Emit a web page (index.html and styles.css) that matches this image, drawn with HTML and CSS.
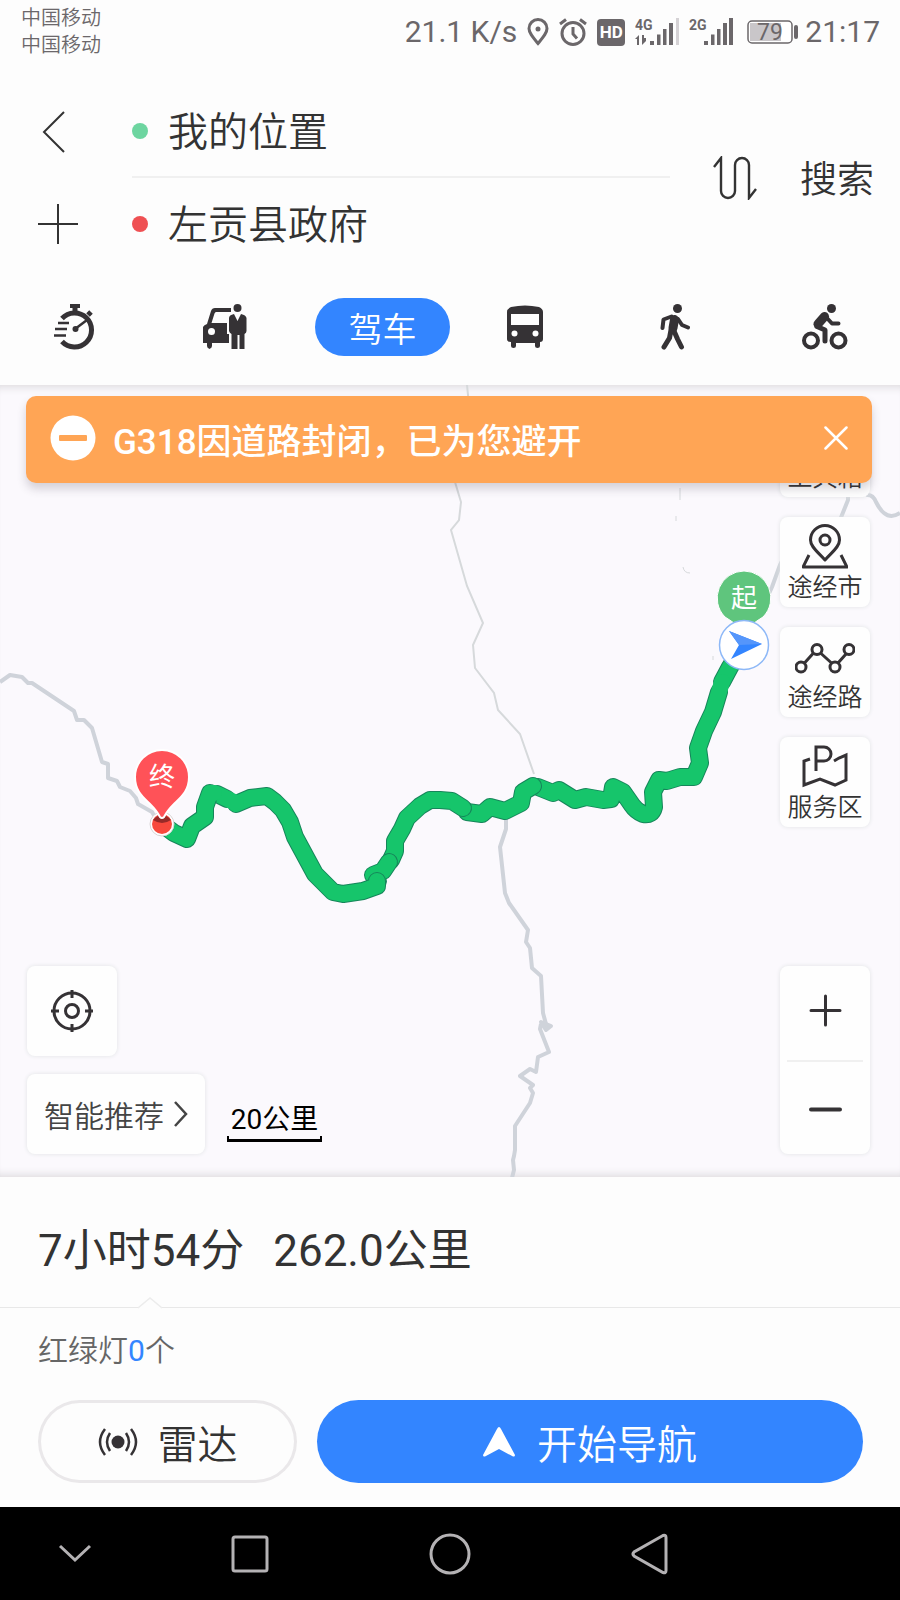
FILE: index.html
```html
<!DOCTYPE html>
<html lang="zh-CN">
<head>
<meta charset="utf-8">
<meta name="viewport" content="width=device-width, initial-scale=1">
<title>路线规划</title>
<link rel="stylesheet" href="styles.css">
</head>
<body>
<div class="status">
  <div class="carriers"><span>中国移动</span><span>中国移动</span></div>
  <div class="indicators">
    <span class="speed">21.1 K/s</span>
    <svg width="22" height="28" viewBox="0 0 22 28" fill="none" stroke="#6b676a" stroke-width="3"><path d="M11 25.500C6 19.500 2 15 2 10.500a9 9 0 0 1 18 0C20 15 16 19.500 11 25.500z"/><circle cx="11" cy="11" r="2.500" fill="#6b676a" stroke="none"/></svg>
    <svg class="alarm" width="28" height="28" viewBox="0 0 28 28" fill="none" stroke="#6b676a" stroke-width="3"><circle cx="14" cy="15.500" r="11"/><path d="M14 9v7l4 4.500M1 6l6-4.500M27 6l-6-4.500"/></svg>
    <span class="hd">HD</span>
    <svg class="signal" width="44" height="28" viewBox="0 0 44 28" fill="#6b676a"><text x="0" y="12" class="net">4G</text><path d="M0 21l4-4v10H2v-6zM7 17v10l4-4v-3H9v-3zM15 23h4v4h-4zM22 16.500h3.500V27H22zM28 11h3.500v16H28zM34 5h4v22h-4z"/><path fill="#d5d2d5" d="M41 0h3v27h-3z"/></svg>
    <svg class="signal" width="44" height="28" viewBox="0 0 44 28" fill="#6b676a"><text x="0" y="12" class="net">2G</text><path d="M15 23h4v4h-4zM22 16.500h3.500V27H22zM28 11h3.500v16H28zM34 5h4v22h-4zM40 0h4v27h-4z"/></svg>
    <svg class="battery" width="51" height="26" viewBox="0 0 51 26"><rect x="1" y="2" width="44" height="22" rx="4" fill="#fff" stroke="#6b676a" stroke-width="1.500"/><path fill="#c9c6c9" d="M3 4h31v18H3z"/><rect x="47" y="6" width="4" height="14" rx="2" fill="#6b676a"/><text x="23" y="21" class="level">79</text></svg>
    <span>21:17</span>
  </div>
</div>

<header class="header">
  <div class="planner">
    <div class="rows">
      <div class="row">
        <button class="icon-btn" aria-label="返回"><svg width="40" height="42" viewBox="0 0 40 42" fill="none" stroke="#333" stroke-width="2"><path d="M26 1L6 21l20 20"/></svg></button>
        <label class="field line"><i class="dot from"></i><input aria-label="起点" value="我的位置"></label>
      </div>
      <div class="row">
        <button class="icon-btn" aria-label="添加途经点"><svg width="40" height="40" viewBox="0 0 40 40" stroke="#333" stroke-width="2"><path d="M0 20h40M20 0v40"/></svg></button>
        <label class="field"><i class="dot to"></i><input aria-label="终点" value="左贡县政府"></label>
      </div>
    </div>
    <button class="swap" aria-label="交换起终点"><svg width="44" height="44" viewBox="0 0 44 44" fill="none" stroke="#333" stroke-width="2.400"><path d="M1 11L8 2v33a7 7 0 0 0 14 0V9a7 7 0 0 1 14 0v33l7-9"/></svg></button>
    <button class="search">搜索</button>
  </div>
  <nav class="tabs" aria-label="出行方式">
    <button aria-label="智能"><svg width="44" height="46" viewBox="0 0 44 46" fill="none" stroke="#353235" stroke-width="5"><path d="M9 14.500a17 17 0 1 1 0 23"/><path d="M17 2h10" stroke-width="4"/><path d="M22 3v5M35 11l3-3"/><path d="M22 25L34 16" stroke-width="2.500"/><circle cx="22.500" cy="25" r="3" fill="#353235" stroke="none"/><path d="M5 19h11M2 25h12M1 31.500h12" stroke-width="2.500"/></svg></button>
    <button aria-label="打车"><svg width="46" height="46" viewBox="0 0 46 46" fill="#353235"><path d="M1 23q1-2 4-3L9 7q1-3 4-3h16v4H14q-1 0-1.500 1.500L9.500 19H25v11h2v9H10v3q0 2-2.500 3Q5 44 5 42v-3H1z"/><circle cx="9.500" cy="27.500" r="3.500" fill="#fff"/><circle cx="35.500" cy="4" r="4"/><path d="M27 14q0-3 5-4l3.500 7 3.500-7q5 1 5.500 4v13q0 2-2 3v15h-5V31h-2v14h-6V30q-2-1-2.500-3z"/></svg></button>
    <button class="active" aria-current="true">驾车</button>
    <button aria-label="公交"><svg width="36" height="44" viewBox="0 0 36 44" fill="#353235"><path fill-rule="evenodd" d="M0 7q0-3 4-5 14-3 28 0 4 2 4 5v27q0 3-3 3v4q0 2-2.500 2T28 41v-3H9v3q0 2-2.500 2T4 41v-4q-4 0-4-3zM4 9v11h28V9z"/><circle cx="7.500" cy="28.500" r="3" fill="#fff"/><circle cx="28.500" cy="28.500" r="3" fill="#fff"/></svg></button>
    <button aria-label="步行"><svg width="30" height="46" viewBox="0 0 30 46" fill="none" stroke="#353235" stroke-linecap="round" stroke-linejoin="round" stroke-width="4"><circle cx="17.500" cy="4.500" r="4.500" fill="#353235" stroke="none"/><path d="M2.500 24l1-8.500 8-3M18 15l4 6 6 2.500"/><path d="M14.500 15.500L13 24" stroke-width="9"/><path d="M11 26l-1.500 8L4 43M14 27l3.500 8 4 8" stroke-width="5"/></svg></button>
    <button aria-label="骑行"><svg width="46" height="46" viewBox="0 0 46 46" fill="none" stroke="#353235" stroke-linecap="round" stroke-linejoin="round" stroke-width="4"><circle cx="9" cy="36.500" r="7"/><circle cx="36.500" cy="36.500" r="7"/><circle cx="29.500" cy="4.500" r="4.500" fill="#353235" stroke="none"/><path d="M24 13l6 6.500h6.500"/><path d="M22.500 12.500L16 20" stroke-width="9"/><path d="M15 22.500l8 3.500v11" stroke-width="5"/></svg></button>
  </nav>
</header>

<main class="map">
  <svg class="canvas" viewBox="0 385 900 792" preserveAspectRatio="xMidYMid slice" role="img" aria-label="路线地图">
    <g fill="none" stroke="#cfd3da" stroke-width="4" stroke-linejoin="round">
      <path d="M0 682l10-7 12 2 6 6h4l42 28 3 9h7l8 8 10 34 6 2v14l9 3 3 6 10 4 6 7 2 6 14 8 6 10"/>
      <path d="M506 815v14l-6 18 5 46 4 10 19 27-2 12 4 6 2 20 9 8 2 37 3 11M541 1024l-1 5 9 23-11 5-2 15-6-3-10 7 13 9-3 3 3 5-3 10-15 23v24l-1 6-1 4 1 10-2 8"/>
      <path d="M541 1022l5 2 5 2-5 4-4-6z" fill="#cfd3da"/>
      <path d="M900 513q-9 6-16 0-4-3-8-11-3-8-10-7M848 480v20l-8 20-14 20M790 545l-10 20-8 22-10 22"/>
    </g>
    <g fill="none" stroke="#d6d9db" stroke-width="2">
      <path d="M467 385l2 20M455 482l6 20-2 18-8 10 16 56 16 37-10 22 2 23 19 25 4 17 22 24 14 40"/>
      <path stroke-width="1" d="M680 488v12M676 516v5M683 567q1 6 7 6M713 656v4"/>
    </g>
    <g class="route">
      <path class="edge" d="M744 645L730 667l-8 15"/><path class="fill" d="M744 645L730 667l-8 15"/>
      <path class="edge" d="M719 692l-6 20-9 19-6 17 2 15-6 14-14 0-13 4-8-1-6 12 1 15q-2 9-11 7-7-3-11-9l-9-13-10-5-2 12-8 1-17-3-11 3-16-10-6 3-15-6"/><path class="fill" d="M722 682l-3 10-6 20-9 19-6 17 2 15-6 14-14 0-13 4-8-1-6 12 1 15q-2 9-11 7-7-3-11-9l-9-13-10-5-2 12-8 1-17-3-11 3-16-10-6 3-15-6"/>
      <path class="edge" d="M533 786l-10 6-2 11-16 8-15-4-8 7-15-2"/><path class="fill" d="M533 786l-10 6-2 11-16 8-15-4-8 7-15-2"/>
      <path class="edge" d="M463 808l-11-7-12-1-10 0-10 6-13 12-5 11-7 12 0 10-4 9"/><path class="fill" d="M463 808l-11-7-12-1-10 0-10 6-13 12-5 11-7 12 0 10-4 9"/>
      <path class="edge" d="M389 862l-6 9-10 4 5 6"/><path class="fill" d="M389 862l-6 9-10 4 5 6"/>
      <path class="edge" d="M377 881l0 5-14 5-20 3-10-2-12-12-6-6-20-37-5-15-7-12-8-8-8-6-17 2-14 6"/><path class="fill" d="M377 881l0 5-14 5-20 3-10-2-12-12-6-6-20-37-5-15-7-12-8-8-8-6-17 2-14 6"/>
      <path class="edge" d="M227 799l-10-5"/><path class="fill" d="M236 803l-19-9"/>
      <path class="edge" d="M210 793l-5 14 0 10-13 9-5 13-13-6-12-9"/><path class="fill" d="M214 793h-4l-5 14 0 10-13 9-5 13-13-6-12-9"/>
    </g>
    <g>
      <path d="M744 571a27 27 0 0 1 19 46q-13 8-19 15-6-7-19-15a27 27 0 0 1 19-46z" fill="#5fc57d" stroke="#fff" stroke-width="1"/>
      <text class="pin-text" x="744" y="607">起</text>
      <circle cx="744" cy="645" r="24.500" fill="#fff" stroke="#8db8f7" stroke-width="1.500"/>
      <path d="M729 631l33 13-31 15 8-14z" fill="#3385ff"/><path d="M729 631l33 13-23 1z" fill="#5596fb"/>
    </g>
    <g>
      <circle cx="162" cy="824" r="12" fill="#fff" stroke="#d8d4d6" stroke-width="1"/><circle cx="162" cy="824" r="10" fill="#f7493d"/><path d="M153 820q9-10 18 0-9 6-18 0z" fill="#962a28"/>
      <path d="M162 750a27 27 0 0 1 27 27c0 14-8 20-15 27q-7 7-10 13-2 2-4 0-3-6-10-13c-7-7-15-13-15-27a27 27 0 0 1 27-27z" fill="#ff5258" stroke="#fff" stroke-width="2"/>
      <text class="pin-text" x="162" y="786">终</text>
    </g>
  </svg>

  <div class="left">
    <button class="card locate" aria-label="定位"><svg width="42" height="42" viewBox="0 0 42 42" fill="none" stroke="#353235" stroke-width="3"><circle cx="21" cy="21" r="18"/><circle cx="21" cy="21" r="6.500"/><path d="M21 0v8M21 34v8M0 21h8M34 21h8"/></svg></button>
    <div class="foot">
      <button class="card smart">智能推荐<svg width="14" height="26" viewBox="0 0 14 26" fill="none" stroke="#444" stroke-width="2.500"><path d="M1 1l11 12L1 25"/></svg></button>
      <div class="scale">20公里</div>
    </div>
  </div>

  <div class="right">
    <div class="tools">
      <button class="card tool"><svg width="46" height="46" viewBox="0 0 46 46" fill="none" stroke="#353235" stroke-width="3"><path d="M3 14h40v26H3zM15 14V6h16v8M3 25h40"/></svg>工具箱</button>
      <button class="card tool"><svg width="46" height="46" viewBox="0 0 46 46" fill="none" stroke="#353235" stroke-width="3" stroke-linejoin="round"><path d="M23 36C16 28 8.500 23 8.500 16a14.500 14.500 0 0 1 29 0C37.500 23 30 28 23 36z"/><circle cx="23" cy="16" r="5"/><path d="M7 31L1 43h44l-6-12"/></svg>途经市</button>
      <button class="card tool"><svg width="60" height="46" viewBox="0 0 60 46" fill="none" stroke="#353235" stroke-width="3"><circle cx="6" cy="33" r="5"/><circle cx="22" cy="15.500" r="5"/><circle cx="40" cy="33" r="5"/><circle cx="54" cy="15.500" r="5"/><path d="M9.500 29l9-10M25.500 19l11 10M43 29l8-9"/></svg>途经路</button>
      <button class="card tool"><svg width="46" height="46" viewBox="0 0 46 46" fill="none" stroke="#353235" stroke-width="3"><path d="M8 15l-6 2v24l16-6 15 6 11-5V11l-7 3-5 3"/><path d="M14 27V3h8a7 7 0 0 1 0 14h-8"/></svg>服务区</button>
    </div>
    <div class="card zoom">
      <button aria-label="放大"><svg width="33" height="33" viewBox="0 0 33 33" stroke="#353235" stroke-width="3" stroke-linecap="round"><path d="M2 16.500h29M16.500 2v29"/></svg></button>
      <button aria-label="缩小"><svg width="33" height="33" viewBox="0 0 33 33" stroke="#353235" stroke-width="4" stroke-linecap="round"><path d="M2 16.500h29"/></svg></button>
    </div>
  </div>

  <div class="banner" role="alert">
    <svg width="46" height="46" viewBox="0 0 46 46"><circle cx="23" cy="23" r="22.500" fill="#fff"/><rect x="9" y="20" width="28" height="6" rx="1" fill="#ffa555"/></svg>
    <span>G318因道路封闭，已为您避开</span>
    <button aria-label="关闭"><svg width="24" height="24" viewBox="0 0 24 24" stroke="#fff" stroke-width="2.500" stroke-linecap="round"><path d="M1.500 1.500l21 21M22.500 1.500l-21 21"/></svg></button>
  </div>
</main>

<section class="panel">
  <div class="summary">
    <span>7小时54分</span><span>262.0公里</span>
    <svg class="notch" width="24" height="12" viewBox="0 0 24 12"><path d="M0 11L12 1l12 10" fill="#fdfdfd" stroke="#ececec" stroke-width="1.500"/></svg>
  </div>
  <p class="lights">红绿灯<b>0</b>个</p>
  <div class="actions">
    <button class="radar"><svg width="40" height="28" viewBox="0 0 40 28" fill="none" stroke="#353235" stroke-width="2.500"><circle cx="20" cy="14" r="6.500" fill="#353235" stroke="none"/><path d="M12 5q-6 9 0 18M28 5q6 9 0 18M7 1q-10 13 0 26M33 1q10 13 0 26"/></svg>雷达</button>
    <button class="start"><svg width="32" height="30" viewBox="0 0 32 30" fill="#fff"><path d="M16 0q1 0 2 2l14 26q0 2-2 1.500L16 22 2 29.500Q0 30 0 28L14 2q1-2 2-2z"/></svg>开始导航</button>
  </div>
</section>

<nav class="system" aria-label="系统导航">
  <button aria-label="收起"><svg width="42" height="42" viewBox="0 0 42 42"><path d="M6 13l15 14 15-14"/></svg></button>
  <button aria-label="最近任务"><svg width="42" height="42" viewBox="0 0 42 42"><rect x="4" y="4" width="34" height="34" rx="2"/></svg></button>
  <button aria-label="主页"><svg width="42" height="42" viewBox="0 0 42 42"><circle cx="21" cy="21" r="19"/></svg></button>
  <button aria-label="返回"><svg width="42" height="42" viewBox="0 0 42 42"><path d="M34 2.500L5 19q-2 2 0 4l29 16.500q3 1 3-2v-33q0-3-3-2z"/></svg></button>
</nav>
</body>
</html>
```
FILE: styles.css
```css
* { box-sizing: border-box; }
body {
  margin: 0;
  min-height: 100vh;
  display: flex;
  flex-direction: column;
  background: #fdfdfd;
  color: #333;
  font-family: Roboto, "Noto Sans CJK SC", sans-serif;
}
button, input {
  font: inherit;
  color: inherit;
  border: 0;
  padding: 0;
  margin: 0;
  background: none;
}
button {
  display: flex;
  align-items: center;
  justify-content: center;
  font-weight: 350;
}
svg { display: block; flex: none; }

.status {
  height: 62px;
  padding: 2px 20px 0 21px;
  display: flex;
  align-items: center;
  justify-content: space-between;
  color: #6b676a;
}
.carriers { display: flex; flex-direction: column; font-size: 20px; line-height: 27px; font-weight: 350; }
.indicators { display: flex; align-items: center; gap: 10px; font-size: 30px; line-height: 36px; }
.hd {
  width: 28px;
  border-radius: 4px;
  background: #6b676a;
  color: #fff;
  font-size: 17px;
  font-weight: 700;
  line-height: 27px;
  text-align: center;
}
.net { font-size: 14px; font-weight: 700; }
.battery { margin: 0 -3px 0 4px; }
.level { font-size: 23px; text-anchor: middle; fill: #6b676a; }

.header { padding: 24px 0 29px; }
.planner { display: flex; align-items: center; padding-right: 26px; }
.rows { flex: 1; min-width: 0; }
.row { display: flex; }
.icon-btn { width: 132px; padding-right: 17px; }
.field {
  flex: 1;
  height: 92px;
  display: flex;
  align-items: center;
  gap: 20px;
  min-width: 0;
}
.field.line { border-bottom: 2px solid #f0f0f0; }
.field input { flex: 1; min-width: 0; font-size: 40px; line-height: 56px; padding-top: 4px; font-weight: 350; }
.dot { width: 16px; height: 16px; border-radius: 50%; }
.from { background: #6dd5a0; }
.to { background: #ef5053; }
.swap { margin: 0 43px; }
.search { font-size: 37px; line-height: 52px; white-space: nowrap; padding-top: 6px; }
.tabs { margin-top: 28px; display: grid; grid-template-columns: repeat(6, 1fr); height: 58px; }
.tabs .active {
  margin-left: 15px;
  border-radius: 29px;
  background: #3385ff;
  color: #fff;
  font-size: 34px;
}

.map {
  position: relative;
  flex: 1;
  display: flex;
  justify-content: space-between;
  padding: 22px 30px 23px 27px;
  background: #fbf9fd;
  overflow: hidden;
  box-shadow: inset 0 9px 9px -7px #dcdadd, inset 0 -9px 9px -7px #dcdadd;
}
.canvas { position: absolute; inset: 0; width: 100%; height: 100%; }
.edge, .fill { fill: none; stroke-linecap: round; stroke-linejoin: round; }
.edge { stroke: #16855a; stroke-width: 18px; }
.fill { stroke: #16c56b; stroke-width: 16px; }
.pin-text { font-size: 26px; text-anchor: middle; fill: #fff; }
.left, .right {
  position: relative;
  display: flex;
  flex-direction: column;
}
.left { justify-content: flex-end; gap: 18px; }
.right { justify-content: space-between; gap: 20px; }
.card {
  border-radius: 8px;
  background: #fefefe;
  box-shadow: 0 0 4px #e0e3e4;
}
.locate { width: 90px; height: 90px; }
.foot { display: flex; align-items: flex-end; gap: 22px; }
.smart { height: 80px; padding: 0 17px; gap: 10px; font-size: 30px; color: #444; }
.scale {
  margin-bottom: 12px;
  width: 95px;
  height: 40px;
  font-size: 28px;
  line-height: 36px;
  text-align: center;
  color: #000;
  background:
    linear-gradient(#000, #000) left bottom / 2px 6px no-repeat,
    linear-gradient(#000, #000) right bottom / 2px 6px no-repeat,
    linear-gradient(#000, #000) left bottom / 100% 3px no-repeat;
}
.tools { display: flex; flex-direction: column; gap: 20px; }
.tool {
  width: 90px;
  height: 90px;
  flex-direction: column;
  gap: 2px;
  font-size: 25px;
  line-height: 32px;
  padding-top: 3px;
}
.zoom { padding: 0 7px; }
.zoom button { width: 100%; height: 94px; padding-bottom: 6px; }
.zoom button + button { border-top: 2px solid #f0f0f0; padding: 2px 0 0; }
.banner {
  position: absolute;
  top: 11px;
  left: 26px;
  right: 28px;
  height: 87px;
  padding: 0 24px 3px;
  display: flex;
  align-items: center;
  gap: 17px;
  border-radius: 10px;
  background: #ffa555;
  box-shadow: 0 6px 10px rgba(60, 50, 70, 0.2);
  color: #fff;
  font-size: 35px;
  font-weight: 500;
}
.banner button { margin-left: auto; }

.panel { padding: 0 37px 24px 38px; }
.summary {
  position: relative;
  height: 131px;
  margin: 0 -37px 0 -38px;
  padding: 18px 38px 0;
  display: flex;
  align-items: center;
  gap: 29px;
  font-size: 44px;
  line-height: 60px;
  border-bottom: 1px solid #e8e8e8;
}
.notch { position: absolute; left: 138px; bottom: -2px; }
.lights { margin: 21px 0 27px; font-size: 30px; line-height: 44px; color: #666; font-weight: 350; }
.lights b { color: #3385ff; font-weight: 400; }
.actions { display: flex; gap: 20px; font-size: 40px; }
.actions button { height: 83px; border-radius: 42px; }
.radar { flex: 259; gap: 20px; box-shadow: inset 0 0 0 3px #eae8ea; }
.start { flex: 546; gap: 22px; background: #3385ff; color: #fff; }

.system {
  height: 93px;
  padding: 0 150px 0 0;
  display: grid;
  grid-template-columns: 1fr 200px 200px 200px;
  background: #000;
}
.system svg { fill: none; stroke: #b4b2b4; stroke-width: 3px; }
```
